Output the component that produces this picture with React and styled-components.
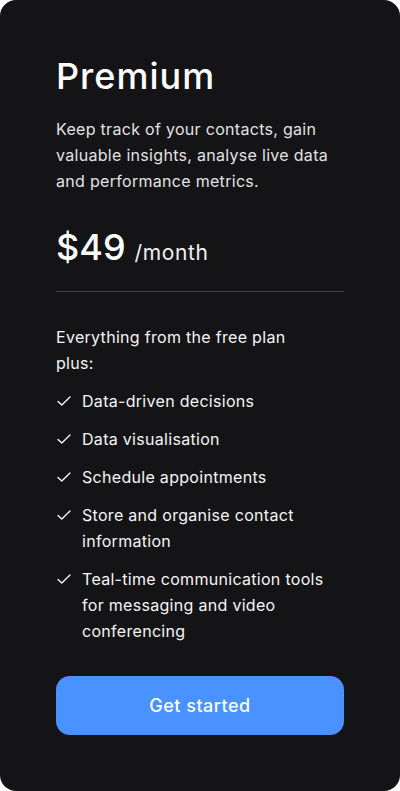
import React from 'react';
import styled, { createGlobalStyle } from 'styled-components';

const GlobalStyle = createGlobalStyle`
  html, body {
    margin: 0;
    padding: 0;
    background: #ffffff;
  }
  body {
    font-family: Inter, "Noto Sans", sans-serif;
  }
`;

const features = [
  'Data-driven decisions',
  'Data visualisation',
  'Schedule appointments',
  'Store and organise contact information',
  'Teal-time communication tools for messaging and video conferencing',
];

function Check() {
  return (
    <svg width="16" height="16" viewBox="0 0 16 16" fill="none">
      <path
        d="M2 8.5L5.8 12L14 4"
        stroke="#ffffff"
        strokeWidth="1.3"
        strokeLinecap="round"
        strokeLinejoin="round"
      />
    </svg>
  );
}

function App() {
  return (
    <>
      <GlobalStyle />
      <Card>
        <Title>Premium</Title>
        <Description>
          Keep track of your contacts, gain valuable insights, analyse live data
          and performance metrics.
        </Description>
        <PriceRow>
          <Price>$49</Price>
          <Period>/month</Period>
        </PriceRow>
        <Divider />
        <Intro>Everything from the free plan plus:</Intro>
        <List>
          {features.map(f => (
            <Item key={f}>
              <IconBox>
                <Check />
              </IconBox>
              <span>{f}</span>
            </Item>
          ))}
        </List>
        <Button type="button">Get started</Button>
      </Card>
    </>
  );
}

export default App;

/* CSS */
const Card = styled.div`
  box-sizing: border-box;
  width: 400px;
  height: 791px;
  padding: 54px 56px 0 56px;
  background-color: #141416;
  border-radius: 16px;
  color: #ffffff;
  display: flex;
  flex-direction: column;
`;

const Title = styled.h1`
  margin: 0;
  font-size: 36px;
  line-height: 44px;
  font-weight: 500;
  letter-spacing: 1px;
`;

const Description = styled.p`
  margin: 18px 0 0 0;
  font-size: 16px;
  line-height: 26px;
  letter-spacing: 0.3px;
  color: #e2e2e4;
  width: 290px;
`;

const PriceRow = styled.div`
  margin-top: 31px;
  height: 44px;
  display: flex;
  align-items: baseline;
  gap: 9px;
`;

const Price = styled.span`
  font-size: 36px;
  line-height: 44px;
  font-weight: 500;
`;

const Period = styled.span`
  font-size: 21px;
  line-height: 44px;
  letter-spacing: 0.6px;
  color: #f0f0f2;
`;

const Divider = styled.hr`
  margin: 22px 0 0 0;
  border: none;
  height: 1px;
  background-color: #414144;
`;

const Intro = styled.p`
  margin: 32px 0 0 0;
  width: 245px;
  font-size: 16px;
  line-height: 26px;
  letter-spacing: 0.3px;
  color: #f4f4f6;
`;

const List = styled.ul`
  list-style: none;
  margin: 12px 0 0 0;
  padding: 0;
  display: flex;
  flex-direction: column;
  gap: 12px;
`;

const Item = styled.li`
  display: flex;
  gap: 10px;
  font-size: 16px;
  line-height: 26px;
  letter-spacing: 0.3px;
  color: #f4f4f6;
`;

const IconBox = styled.span`
  flex: none;
  width: 16px;
  height: 26px;
  display: flex;
  align-items: center;
`;

const Button = styled.button`
  margin-top: 32px;
  height: 59px;
  width: 100%;
  border: none;
  border-radius: 14px;
  background-color: #4a92ff;
  color: #ffffff;
  font-family: inherit;
  font-size: 18px;
  font-weight: 500;
  letter-spacing: 0.5px;
  cursor: pointer;
`;
